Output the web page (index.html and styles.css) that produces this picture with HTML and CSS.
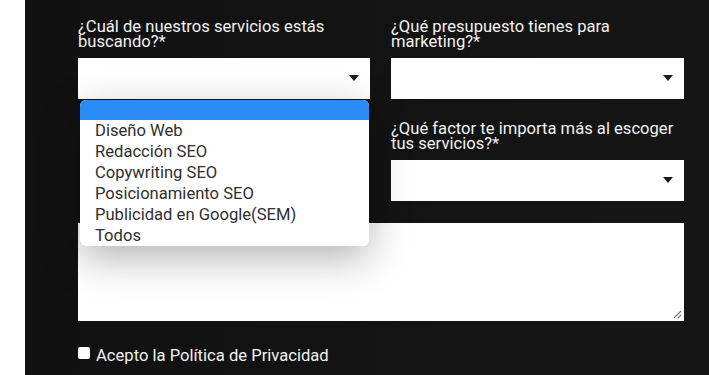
FILE: index.html
```html
<!DOCTYPE html>
<html lang="es">
<head>
    <meta charset="UTF-8">
    <meta name="viewport" content="width=device-width, initial-scale=1.0">
    <title>Contacto</title>
    <link rel="stylesheet" href="styles.css">
</head>
<body>
    <div class="panel">
        <form class="contact-form">
            <div class="field">
                <label class="field-label">¿Cuál de nuestros servicios estás buscando?*</label>
                <div class="select-wrap">
                    <div class="select-box"></div>
                </div>
                <!-- open dropdown list -->
                <ul class="options">
                    <li class="option selected"></li>
                    <li class="option">Diseño Web</li>
                    <li class="option">Redacción SEO</li>
                    <li class="option">Copywriting SEO</li>
                    <li class="option">Posicionamiento SEO</li>
                    <li class="option">Publicidad en Google(SEM)</li>
                    <li class="option">Todos</li>
                </ul>
            </div>
            <div class="field">
                <label class="field-label">¿Qué presupuesto tienes para marketing?*</label>
                <div class="select-wrap">
                    <div class="select-box"></div>
                </div>
            </div>
            <div class="field"></div>
            <div class="field">
                <label class="field-label">¿Qué factor te importa más al escoger tus servicios?*</label>
                <div class="select-wrap">
                    <div class="select-box"></div>
                </div>
            </div>
            <div class="field wide">
                <div class="textarea-box">
                    <svg class="resize-grip" width="9" height="9" viewBox="0 0 9 9">
                        <path d="M8 1 L1 8 M8 5 L5 8" stroke="#777" stroke-width="1.2"/>
                    </svg>
                </div>
            </div>
        </form>
        <div class="privacy">
            <span class="checkbox"></span>
            <span class="privacy-text">Acepto la Política de Privacidad</span>
        </div>
    </div>
</body>
</html>
```

FILE: styles.css
```css
html, body {
    margin: 0;
    height: 100%;
}

body {
    background: #ffffff;
    font-family: 'Roboto', 'Liberation Sans', sans-serif;
    overflow: hidden;
}

.panel {
    margin-left: 25px;
    height: 100%;
    background: linear-gradient(90deg, #111111, #151515);
    padding: 19px 0 0 53px;
    box-sizing: border-box;
}

.contact-form {
    width: 606px;
    display: grid;
    grid-template-columns: 292px 293px;
    column-gap: 21px;
    row-gap: 22px;
}

.field {
    position: relative;
    display: flex;
    flex-direction: column;
}

.field.wide {
    grid-column: 1 / span 2;
}

.field-label {
    color: #f2f2f2;
    font-size: 16.6px;
    line-height: 15px;
    margin-bottom: 9px;
}

.select-wrap {
    position: relative;
}

.select-box {
    height: 41px;
    background: #ffffff;
}

.select-wrap::after {
    content: "";
    position: absolute;
    right: 11px;
    top: 17px;
    border-left: 5px solid transparent;
    border-right: 5px solid transparent;
    border-top: 6px solid #141a2a;
}

.options {
    position: absolute;
    top: 81px;
    left: 2px;
    width: 289px;
    margin: 0;
    padding: 0;
    list-style: none;
    background: #ffffff;
    border-radius: 6px;
    overflow: hidden;
    box-shadow: 0 12px 40px rgba(0, 0, 0, 0.3);
    z-index: 5;
}

.option {
    height: 21px;
    line-height: 21px;
    padding-left: 15px;
    font-size: 16.6px;
    color: #2e2e2e;
}

.option.selected {
    height: 20px;
    background: #2b8cf6;
}

.textarea-box {
    position: relative;
    height: 98px;
    background: #ffffff;
}

.resize-grip {
    position: absolute;
    right: 2px;
    bottom: 2px;
}

.privacy {
    display: flex;
    align-items: flex-start;
    gap: 6px;
    margin-top: 26px;
}

.checkbox {
    width: 12px;
    height: 12px;
    background: #ffffff;
    border-radius: 2px;
}

.privacy-text {
    color: #f2f2f2;
    font-size: 16.6px;
    line-height: 20px;
    margin-top: -1px;
}
```
